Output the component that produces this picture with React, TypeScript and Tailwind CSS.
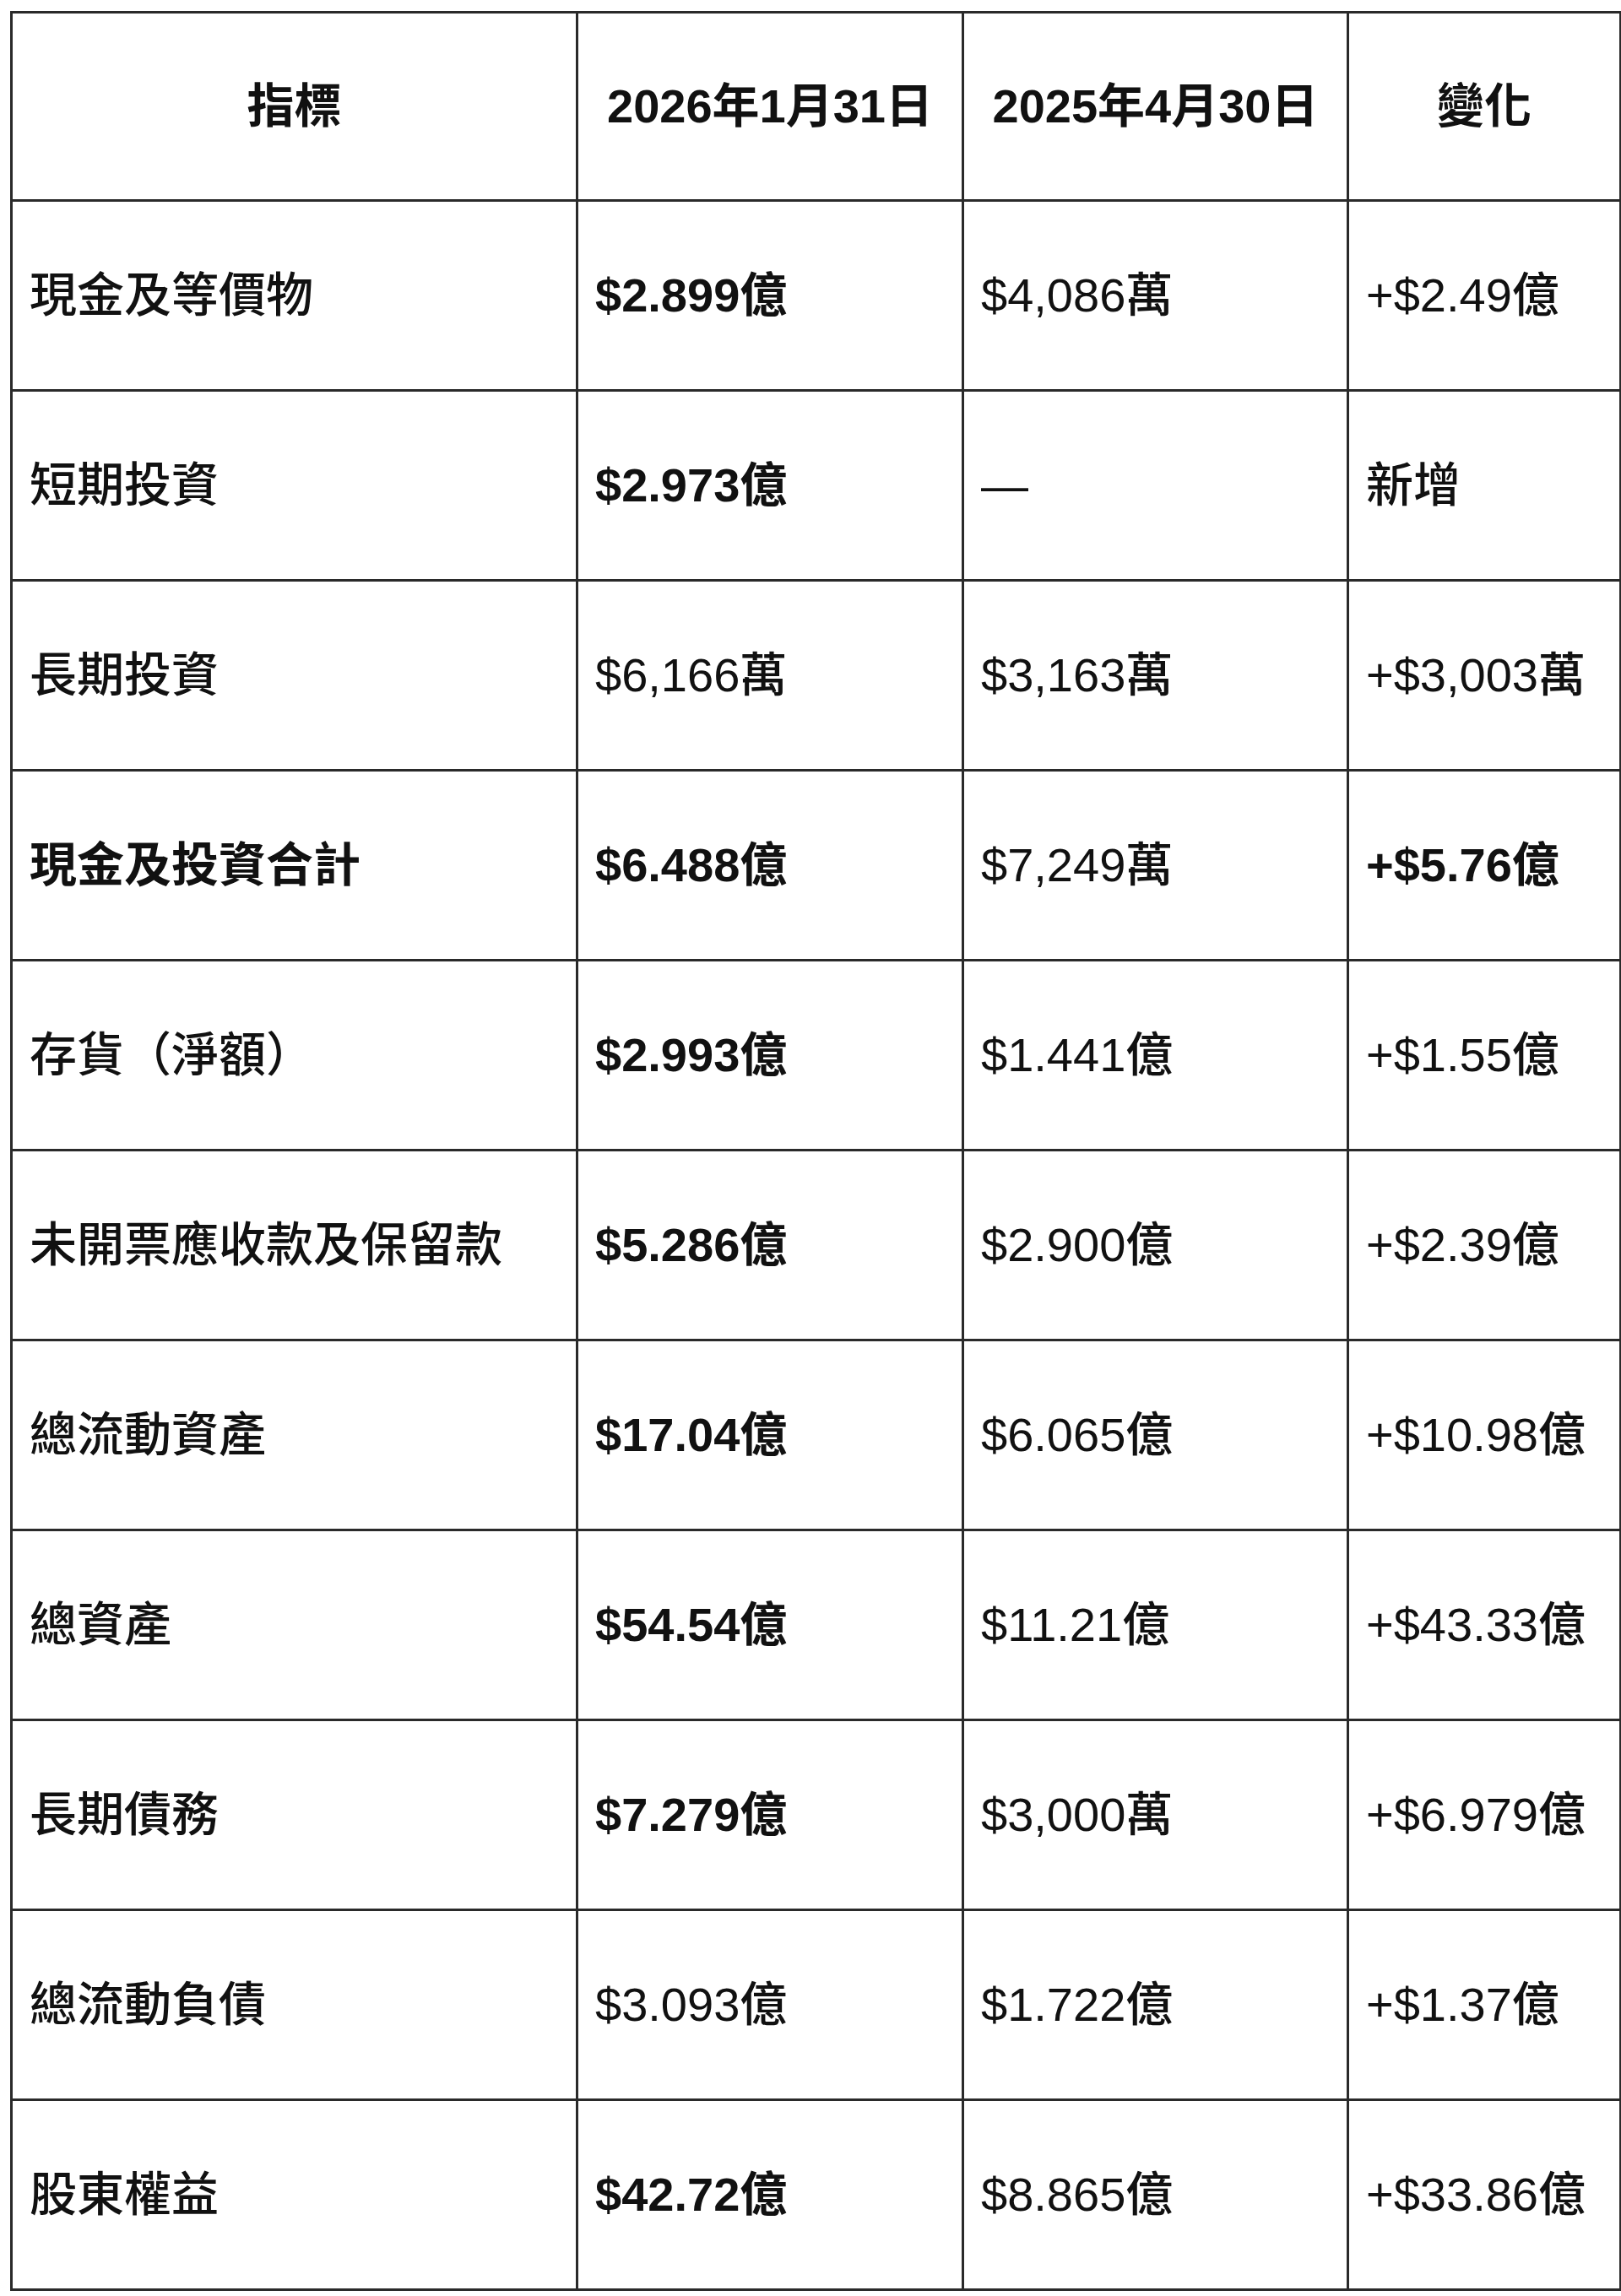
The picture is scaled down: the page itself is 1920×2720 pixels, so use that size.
import React from 'react';

type Row = {
  label: string;
  jan: string;
  apr: string;
  change: string;
  boldLabel?: boolean;
  boldJan?: boolean;
  boldChange?: boolean;
};

const rows: Row[] = [
  { label: '現金及等價物', jan: '$2.899億', apr: '$4,086萬', change: '+$2.49億', boldJan: true },
  { label: '短期投資', jan: '$2.973億', apr: '—', change: '新增', boldJan: true },
  { label: '長期投資', jan: '$6,166萬', apr: '$3,163萬', change: '+$3,003萬' },
  { label: '現金及投資合計', jan: '$6.488億', apr: '$7,249萬', change: '+$5.76億', boldLabel: true, boldJan: true, boldChange: true },
  { label: '存貨（淨額）', jan: '$2.993億', apr: '$1.441億', change: '+$1.55億', boldJan: true },
  { label: '未開票應收款及保留款', jan: '$5.286億', apr: '$2.900億', change: '+$2.39億', boldJan: true },
  { label: '總流動資產', jan: '$17.04億', apr: '$6.065億', change: '+$10.98億', boldJan: true },
  { label: '總資產', jan: '$54.54億', apr: '$11.21億', change: '+$43.33億', boldJan: true },
  { label: '長期債務', jan: '$7.279億', apr: '$3,000萬', change: '+$6.979億', boldJan: true },
  { label: '總流動負債', jan: '$3.093億', apr: '$1.722億', change: '+$1.37億' },
  { label: '股東權益', jan: '$42.72億', apr: '$8.865億', change: '+$33.86億', boldJan: true },
];

const cell = 'border-[3px] border-[#2a2a2a] px-[20px] align-middle text-left';
const head = 'border-[3px] border-[#2a2a2a] text-center align-middle font-bold';

export default function App() {
  return (
    <div className="min-h-[2720px] w-[1920px] bg-white pl-[12px] pt-[13px] text-[#111] font-['Liberation_Sans','Noto_Sans_CJK_TC',sans-serif]">
      <table className="w-[1906px] table-fixed border-collapse text-[56px] leading-none">
        <colgroup>
          <col className="w-[670px]" />
          <col className="w-[457px]" />
          <col className="w-[456px]" />
          <col className="w-[323px]" />
        </colgroup>
        <thead>
          <tr className="h-[223px]">
            <th className={head}>指標</th>
            <th className={head}>2026年1月31日</th>
            <th className={head}>2025年4月30日</th>
            <th className={head}>變化</th>
          </tr>
        </thead>
        <tbody>
          {rows.map((r) => (
            <tr key={r.label} className="h-[225px]">
              <td className={`${cell} ${r.boldLabel ? 'font-bold' : 'font-medium'}`}>{r.label}</td>
              <td className={`${cell} ${r.boldJan ? 'font-bold' : 'font-medium'}`}>{r.jan}</td>
              <td className={`${cell} font-medium`}>{r.apr}</td>
              <td className={`${cell} whitespace-nowrap ${r.boldChange ? 'font-bold' : 'font-medium'}`}>{r.change}</td>
            </tr>
          ))}
        </tbody>
      </table>
    </div>
  );
}
